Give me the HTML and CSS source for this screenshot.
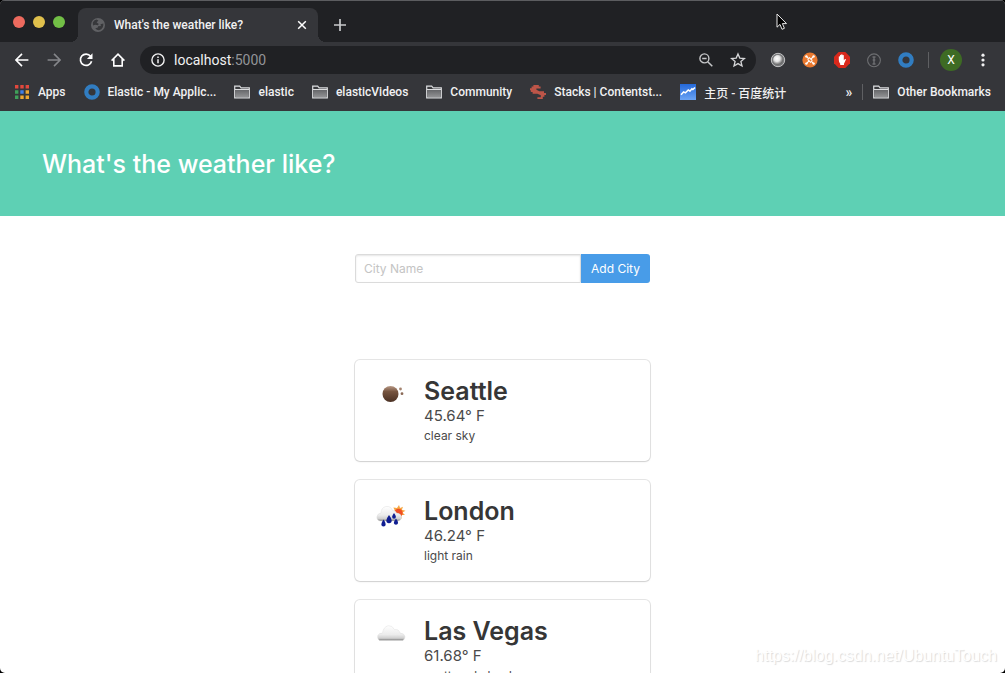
FILE: index.html
```html
<!DOCTYPE html>
<html lang="en">
<head>
    <meta charset="UTF-8">
    <meta name="viewport" content="width=device-width, initial-scale=1.0">
    <title>What's the weather like?</title>
    <link rel="stylesheet" href="styles.css">
</head>
<body>
    <svg class="defs" width="0" height="0" aria-hidden="true">
        <defs>
            <linearGradient id="folder-fill" x1="0" y1="0" x2="0" y2="1">
                <stop offset="0" stop-color="#66676a"/>
                <stop offset="1" stop-color="#929395"/>
            </linearGradient>
            <linearGradient id="cloud-fill" x1="0" y1="0" x2="0" y2="1">
                <stop offset="0" stop-color="#ffffff"/>
                <stop offset="0.6" stop-color="#ececec"/>
                <stop offset="0.85" stop-color="#cfcfcf"/>
                <stop offset="1" stop-color="#777777"/>
            </linearGradient>
            <linearGradient id="moon-fill" x1="0" y1="0" x2="0" y2="1">
                <stop offset="0" stop-color="#b99a86"/>
                <stop offset="0.35" stop-color="#76543f"/>
                <stop offset="1" stop-color="#4a3023"/>
            </linearGradient>
            <linearGradient id="chart-fill" x1="0" y1="0" x2="0" y2="1">
                <stop offset="0" stop-color="#2468d8"/>
                <stop offset="1" stop-color="#6ba4f5"/>
            </linearGradient>
            <radialGradient id="ball-fill" cx="0.4" cy="0.35" r="0.6">
                <stop offset="0" stop-color="#ffffff"/>
                <stop offset="0.5" stop-color="#e4e4e4"/>
                <stop offset="1" stop-color="#6c6c6c"/>
            </radialGradient>
            <symbol id="folder" viewBox="0 0 16 16">
                <path d="M.7 13.8V2.2h5l1.4 1.6h8.2v10z" fill="#3a3b3e" stroke="#dcdddf" stroke-width="1.2"/>
                <path d="M1.3 6h13.4v7.2H1.3z" fill="url(#folder-fill)"/>
                <path d="M1 5.5h14" stroke="#dcdddf"/>
            </symbol>
            <symbol id="ring" viewBox="0 0 16 16">
                <circle cx="8" cy="8" r="5.7" fill="none" stroke="#317dc1" stroke-width="4.2"/>
            </symbol>
        </defs>
    </svg>

    <div class="window">
        <header class="browser">
            <div class="tab-strip">
                <div class="lights">
                    <button class="light red" aria-label="Close window"></button>
                    <button class="light yellow" aria-label="Minimize window"></button>
                    <button class="light green" aria-label="Zoom window"></button>
                </div>
                <div class="tab">
                    <svg width="14" height="14" viewBox="0 0 14 14">
                        <circle cx="7" cy="7" r="7" fill="#606164"/>
                        <path d="M1.8 4.4Q3 2.2 5.4 1.6L7.4 2.6 5.6 4.6 7.8 6l-1 1.2-2.6-.5L2 7.6zM12.3 5.6l-2.8.6.4 1.9-2.8.1-.5 1.6-2.4.4Q6 12.4 8 12.2q2.6-.6 3.8-3 .8-1.8.5-3.6z" fill="#37383b"/>
                    </svg>
                    <span class="tab-title">What's the weather like?</span>
                    <button class="tab-close" aria-label="Close tab">
                        <svg width="10" height="10" viewBox="0 0 10 10"><path d="M1.2 1.2l7.6 7.6M8.8 1.2L1.2 8.8" stroke="#fff" stroke-width="1.5"/></svg>
                    </button>
                </div>
                <button class="tab-new" aria-label="New tab">
                    <svg width="12" height="12" viewBox="0 0 12 12"><path d="M6 0v12M0 6h12" stroke="#c9cacc" stroke-width="1.7"/></svg>
                </button>
            </div>

            <div class="toolbar">
                <button class="tool" aria-label="Back">
                    <svg width="16" height="16" viewBox="0 0 16 16"><path d="M14.4 8H2M8 1.9L1.9 8 8 14.1" fill="none" stroke="#fff" stroke-width="1.6"/></svg>
                </button>
                <button class="tool" aria-label="Forward">
                    <svg width="16" height="16" viewBox="0 0 16 16"><path d="M1.6 8H14M8 1.9L14.1 8 8 14.1" fill="none" stroke="#85868a" stroke-width="1.6"/></svg>
                </button>
                <button class="tool" aria-label="Reload">
                    <svg width="16" height="16" viewBox="0 0 16 16"><path d="M12.6 4.2A5.7 5.7 0 1 0 13.6 9.3" fill="none" stroke="#fff" stroke-width="1.7"/><path d="M14.5 1.3v5.6H8.9z" fill="#fff"/></svg>
                </button>
                <button class="tool" aria-label="Home">
                    <svg width="16" height="16" viewBox="0 0 16 16"><path d="M1.6 8.6L8 2.2l6.4 6.4M3.8 7v6.9h8.4V7" fill="none" stroke="#fff" stroke-width="1.6"/></svg>
                </button>
                <div class="address">
                    <svg width="14" height="14" viewBox="0 0 14 14"><circle cx="7" cy="7" r="6.1" fill="none" stroke="#f1f1f2" stroke-width="1.4"/><path d="M7 6.2v4M7 3.4v1.5" stroke="#f1f1f2" stroke-width="1.5"/></svg>
                    <span class="url">localhost<span class="port">:5000</span></span>
                    <button class="address-btn" aria-label="Zoom">
                        <svg width="16" height="16" viewBox="0 0 16 16"><circle cx="6.4" cy="6.4" r="4.5" fill="none" stroke="#c5c6c8" stroke-width="1.4"/><path d="M4.2 6.4h4.4M9.7 9.7l4.6 4.6" stroke="#c5c6c8" stroke-width="1.5"/></svg>
                    </button>
                    <button class="address-btn" aria-label="Bookmark this page">
                        <svg width="16" height="16" viewBox="0 0 16 16"><path d="M8 1.9l1.8 4.2 4.6.4-3.5 3 1.1 4.5L8 11.6 4 14l1.1-4.5-3.5-3 4.6-.4z" fill="none" stroke="#d5d6d8" stroke-width="1.3"/></svg>
                    </button>
                </div>
                <button class="tool" aria-label="Ball extension">
                    <svg width="16" height="16" viewBox="0 0 16 16"><circle cx="8" cy="8" r="6.7" fill="#77787a" stroke="#c2c2c3"/><circle cx="8" cy="8" r="5" fill="url(#ball-fill)"/></svg>
                </button>
                <button class="tool" aria-label="Joomla extension">
                    <svg width="16" height="16" viewBox="0 0 16 16"><circle cx="8" cy="8" r="7.6" fill="#e9792f"/><path d="M4.6 4.6l2.2 2.2M11.4 4.6L9.2 6.8M4.6 11.4l2.2-2.2M11.4 11.4L9.2 9.2M7 5.4l3.4 3.2M5.6 7.4L9 10.6" stroke="#fff" stroke-width="1.2" fill="none"/><g fill="#fff"><circle cx="4.4" cy="4.4" r="1.2"/><circle cx="11.6" cy="4.4" r="1.2"/><circle cx="4.4" cy="11.6" r="1.2"/><circle cx="11.6" cy="11.6" r="1.2"/></g></svg>
                </button>
                <button class="tool" aria-label="Ad blocker">
                    <svg width="16" height="16" viewBox="0 0 16 16"><path d="M4.7 0h6.6L16 4.7v6.6L11.3 16H4.7L0 11.3V4.7z" fill="#d9291c"/><path d="M4.8 8.1V4.5q.7-.7 1.2 0V3.2q.7-.7 1.2 0v-.7q.7-.7 1.3 0v.7q.7-.6 1.3.1v5l1.2-1.2q.9-.3 1 .5L10 11.7V13H6.2v-1.2Q4.8 10.2 4.8 8.1z" fill="#fff"/></svg>
                </button>
                <button class="tool" aria-label="Password extension">
                    <svg width="16" height="16" viewBox="0 0 16 16"><circle cx="8" cy="8.3" r="6.4" fill="none" stroke="#6d6e71" stroke-width="1.1"/><path d="M8 5v7M6.5 5h3M6.7 8h2.6M6.5 12h3" stroke="#6d6e71" stroke-width="1.4"/></svg>
                </button>
                <button class="tool" aria-label="Elastic extension">
                    <svg width="16" height="16"><use href="#ring"/></svg>
                </button>
                <span class="divider"></span>
                <button class="tool" aria-label="Profile"><span class="avatar">X</span></button>
                <button class="tool" aria-label="Menu">
                    <svg width="16" height="16" viewBox="0 0 16 16" fill="#f1f1f2"><circle cx="8" cy="3.2" r="1.6"/><circle cx="8" cy="8" r="1.6"/><circle cx="8" cy="12.8" r="1.6"/></svg>
                </button>
            </div>

            <nav class="bookmarks">
                <a class="bookmark" href="#">
                    <svg width="16" height="16" viewBox="0 0 16 16">
                        <path d="M1 1h3.4v3.4H1zM6.3 1h3.4v3.4H6.3zM11.6 1H15v3.4h-3.4z" fill="#e2483d"/>
                        <path d="M1 6.3h3.4v3.4H1zM1 11.6h3.4V15H1z" fill="#3fa15a"/>
                        <path d="M6.3 6.3h3.4v3.4H6.3z" fill="#3f7fe8"/>
                        <path d="M11.6 6.3H15v3.4h-3.4zM11.6 11.6H15V15h-3.4zM6.3 11.6h3.4V15H6.3z" fill="#eea832"/>
                    </svg>
                    Apps
                </a>
                <a class="bookmark" href="#"><svg width="16" height="16"><use href="#ring"/></svg>Elastic - My Applic...</a>
                <a class="bookmark" href="#"><svg width="16" height="16"><use href="#folder"/></svg>elastic</a>
                <a class="bookmark" href="#"><svg width="16" height="16"><use href="#folder"/></svg>elasticVideos</a>
                <a class="bookmark" href="#"><svg width="16" height="16"><use href="#folder"/></svg>Community</a>
                <a class="bookmark" href="#">
                    <svg width="16" height="16" viewBox="0 0 16 16"><path d="M3.4 1h5.4v1.6h1.8v2H6.4v1.2l3 1.5H14v1.6h2v2h-1.6v1.8h-1.6V15H7.4v-1.8h3.4v-2L7.4 9.7H2.6V8H.8V6.2H0v-2h1.6V2.4h1.8z" fill="#bd5548"/></svg>
                    Stacks | Contentst...
                </a>
                <a class="bookmark" href="#" lang="zh">
                    <svg width="16" height="16" viewBox="0 0 16 16"><path d="M0 0h16v16H0z" fill="url(#chart-fill)"/><path d="M1 10.7l2.6-2.8 1.8 1L8.3 6l1.6 1.2 2-2.4 1 .8L15 3.4" fill="none" stroke="#fff" stroke-width="1.5"/></svg>
                    主页 - 百度统计
                </a>
                <button class="more" aria-label="More bookmarks">»</button>
                <span class="divider"></span>
                <a class="bookmark" href="#"><svg width="16" height="16"><use href="#folder"/></svg>Other Bookmarks</a>
            </nav>

            <svg class="cursor" width="12" height="18" viewBox="0 0 12 18"><path d="M1 1v13.2l3-2.8 2 4.9 2.4-1-2-4.7h4.1z" fill="#000" stroke="#e8e8e8"/></svg>
        </header>

        <main class="page">
            <section class="hero">
                <h1>What's the weather like?</h1>
            </section>

            <section class="content">
                <form class="city-form">
                    <input type="text" name="name" placeholder="City Name" aria-label="City Name">
                    <button type="button">Add City</button>
                </form>

                <article class="box">
                    <svg class="weather" width="36" height="36" viewBox="0 0 36 36">
                        <circle cx="17.5" cy="16" r="8" fill="url(#moon-fill)"/>
                        <circle cx="27.5" cy="11" r="1.4" fill="#a58470"/>
                        <circle cx="29" cy="15.7" r="1.4" fill="#8b6a57"/>
                    </svg>
                    <div>
                        <h2>Seattle</h2>
                        <p class="temp">45.64° F</p>
                        <p class="desc">clear sky</p>
                    </div>
                </article>

                <article class="box">
                    <svg class="weather" width="36" height="36" viewBox="0 0 36 36">
                        <g transform="translate(0 1.5)">
                            <path d="M26 5.5l1.1 3 2.9-1.3-1.1 3 3.6 1-3 1.8 2.5 2.6-3.4-.1.2 3.7-3-2-4.8.5-3-4.8 3.8-1.8-1.4-3.2 3.6.5z" fill="#f7a744"/>
                            <circle cx="25.5" cy="13.5" r="4.2" fill="#f04e23"/>
                            <path d="M7 21.5Q3.3 20.5 4 17q.6-3 4-3.4Q8 8.4 12.8 7q5-.7 6.7 4 3.2-.3 4 2.6 4 .2 5 3.4.3 3.8-3.5 4.5z" fill="url(#cloud-fill)" stroke="#dedede" stroke-width=".5"/>
                            <path d="M10.5 20q2.3 3 2.2 4.7a2.2 2.2 0 0 1-4.4 0Q8.4 23 10.5 20zM16 15.5q2.8 3.5 2.7 5.5a2.7 2.7 0 0 1-5.4 0q.1-2 2.7-5.5zM21 13.5q2 2.5 1.9 3.8a1.9 1.9 0 0 1-3.8 0q.1-1.3 1.9-3.8zM23 19q2.2 2.8 2.1 4.4a2.2 2.2 0 0 1-4.3 0q.1-1.6 2.2-4.4z" fill="#101e91"/>
                        </g>
                    </svg>
                    <div>
                        <h2>London</h2>
                        <p class="temp">46.24° F</p>
                        <p class="desc">light rain</p>
                    </div>
                </article>

                <article class="box">
                    <svg class="weather" width="36" height="36" viewBox="0 0 36 36">
                        <path d="M6.5 22.5Q4 20.5 4.8 17.5q1.5-2.8 4.7-2.3Q10.3 9 15.2 7.7q4-.5 6.4 4 4-1 5.4 3.3 4.5.3 5 3.8-.1 2.7-2.2 3.7z" fill="url(#cloud-fill)" stroke="#dedede" stroke-width=".5"/>
                    </svg>
                    <div>
                        <h2>Las Vegas</h2>
                        <p class="temp">61.68° F</p>
                        <p class="desc">scattered clouds</p>
                    </div>
                </article>
            </section>
        </main>
        <span class="watermark">https://blog.csdn.net/UbuntuTouch</span>
    </div>
</body>
</html>
```
FILE: styles.css
```css
* {
    box-sizing: border-box;
}
html, body {
    height: 100%;
    margin: 0;
    overflow: hidden;
}
body {
    background: #000;
    color: #4a4a4a;
    font-family: Inter, "Noto Sans CJK SC", sans-serif;
    font-size: 12px;
}
button {
    padding: 0;
    border: none;
    background: none;
    color: inherit;
    font: inherit;
    cursor: pointer;
}
svg {
    display: block;
    flex: none;
}
.defs {
    position: absolute;
}
.window {
    position: relative;
    display: flex;
    flex-direction: column;
    height: 100%;
    border-radius: 5px;
    background: #fff;
    overflow: hidden;
}

/* browser chrome */
.browser {
    position: relative;
    flex: none;
    background: #35363a;
    color: #f1f1f2;
    font-family: Roboto, "Noto Sans CJK SC", sans-serif;
    font-weight: 500;
}
.tab-strip {
    display: flex;
    align-items: flex-end;
    height: 42px;
    border-top: 1px solid #5c5d60;
    background: #202124;
}
.lights {
    display: flex;
    align-self: center;
    gap: 8px;
    padding: 0 13px;
}
.light {
    width: 12px;
    height: 12px;
    border-radius: 50%;
}
.red {
    background: #ed6a5e;
}
.yellow {
    background: #e0c04c;
}
.green {
    background: #72bf46;
}
.tab {
    position: relative;
    display: flex;
    align-items: center;
    gap: 9px;
    width: 240px;
    height: 34px;
    padding: 0 11px 0 13px;
    border-radius: 8px 8px 0 0;
    background: #35363a;
}
/* curved feet of the active tab */
.tab::before, .tab::after {
    content: "";
    position: absolute;
    bottom: 0;
    width: 8px;
    height: 8px;
}
.tab::before {
    right: 100%;
    background: radial-gradient(circle at 0 0, #202124 8px, #35363a 8px);
}
.tab::after {
    left: 100%;
    background: radial-gradient(circle at 100% 0, #202124 8px, #35363a 8px);
}
.tab-title {
    flex: 1;
    white-space: nowrap;
}
.tab-new {
    display: flex;
    align-items: center;
    height: 34px;
    margin-left: 16px;
}
.toolbar {
    display: flex;
    align-items: center;
    height: 36px;
    padding: 0 6px;
}
.tool {
    display: flex;
    align-items: center;
    justify-content: center;
    flex: none;
    width: 32px;
    height: 32px;
}
.address {
    display: flex;
    align-items: center;
    flex: 1;
    height: 28px;
    margin: 0 6px;
    padding: 0 2px 0 11px;
    border-radius: 14px;
    background: #202124;
    font-size: 14px;
    font-weight: 400;
}
.url {
    flex: 1;
    margin-left: 9px;
}
.port {
    color: #939498;
}
.address-btn {
    display: flex;
    justify-content: center;
    width: 32px;
}
.divider {
    flex: none;
    width: 1px;
    height: 16px;
    margin: 0 6px;
    background: #5f6063;
}
.avatar {
    width: 22px;
    height: 22px;
    border-radius: 50%;
    background: #3e6b24;
    color: #fff;
    font-weight: 400;
    line-height: 22px;
}
.bookmarks {
    display: flex;
    align-items: center;
    height: 33px;
    padding: 0 14px 5px;
}
.bookmark {
    display: flex;
    align-items: center;
    gap: 8px;
    margin-right: 18px;
    color: inherit;
    text-decoration: none;
    white-space: nowrap;
}
.bookmark:last-child {
    margin-right: 0;
    margin-left: 4px;
}
.more {
    margin-left: auto;
    margin-right: 4px;
    font-size: 14px;
}
.cursor {
    position: absolute;
    top: 13px;
    left: 776px;
}

/* weather page */
.page {
    flex: 1;
    min-height: 0;
}
.hero {
    padding: 36px 42px 34px;
    background: #5ed0b4;
}
.hero h1 {
    margin: 0;
    color: #fff;
    font-size: 25px;
    font-weight: 500;
    line-height: 35px;
}
.content {
    max-width: 295px;
    margin: 0 auto;
    padding-top: 38px;
}
.city-form {
    display: flex;
    margin-bottom: 77px;
}
.city-form input {
    flex: 1;
    min-width: 0;
    height: 29px;
    padding: 0 8px;
    border: 1px solid #dbdbdb;
    border-radius: 3px 0 0 3px;
    box-shadow: inset 0 1px 2px rgba(10, 10, 10, 0.1);
    color: #363636;
    font: inherit;
}
.city-form input::placeholder {
    color: #c4c4c4;
}
.city-form button {
    padding: 0 10px;
    border-radius: 0 3px 3px 0;
    background: #489ce8;
    color: #fff;
}
.box {
    display: flex;
    align-items: flex-start;
    gap: 15px;
    margin-bottom: 19px;
    padding: 18px 18px 16px;
    border-radius: 5px;
    background: #fff;
    box-shadow: 0 1px 2px rgba(10, 10, 10, 0.1), 0 0 0 1px rgba(10, 10, 10, 0.1);
}
.box h2 {
    margin: 0;
    color: #363636;
    font-size: 25px;
    font-weight: 600;
    line-height: 27px;
}
.box p {
    margin: 0;
}
.box .temp {
    font-size: 15px;
    line-height: 22px;
}
.box .desc {
    line-height: 18px;
}
.watermark {
    position: absolute;
    right: 8px;
    bottom: 8px;
    color: #fff;
    font-family: "Liberation Sans", Arial, sans-serif;
    font-size: 16px;
    text-shadow: 1px 1px 1px #dadada;
}
```
